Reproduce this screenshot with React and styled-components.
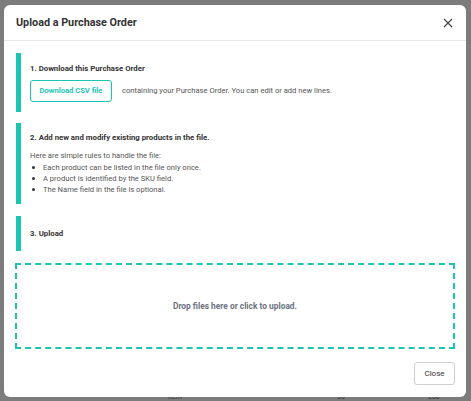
import React from 'react';
import styled, { createGlobalStyle } from 'styled-components';

const teal = '#1cc5b3';

const GlobalStyle = createGlobalStyle`
  html, body {
    margin: 0;
    padding: 0;
    background: #7c7c7c;
  }
  body {
    font-family: Roboto, "Noto Sans", sans-serif;
    color: #333;
  }
`;

const Backdrop = styled.div`
  width: 471px;
  height: 401px;
  box-sizing: border-box;
  padding: 5px 5px 4px 4px;
  background: #7c7c7c;
  position: relative;
  overflow: hidden;
`;

const BehindRow = styled.div`
  position: absolute;
  left: 0;
  right: 0;
  top: 393px;
  height: 8px;
  font-size: 7px;
  line-height: 8px;
  color: #3a3a3a;
`;

const BehindCell = styled.span`
  position: absolute;
  left: ${p => p.x}px;
`;

const Modal = styled.div`
  position: relative;
  width: 462px;
  height: 392px;
  background: #fff;
  border-radius: 6px;
  display: flex;
  flex-direction: column;
  box-sizing: border-box;
`;

const Header = styled.div`
  height: 36px;
  display: flex;
  align-items: center;
  justify-content: space-between;
  padding: 0 12px;
  border-bottom: 1px solid #e8e8e8;
  box-sizing: border-box;
`;

const Title = styled.h1`
  margin: 0;
  font-size: 10.8px;
  font-weight: 700;
  color: #333;
`;

const CloseIcon = styled.button`
  border: none;
  background: none;
  padding: 0;
  width: 12px;
  height: 12px;
  display: flex;
  align-items: center;
  justify-content: center;
  cursor: pointer;
  color: #444;
`;

const Body = styled.div`
  flex: 1;
  display: flex;
  flex-direction: column;
  padding: 12px 11px 0 12px;
  gap: 11px;
`;

const Step = styled.section`
  border-left: 5px solid ${teal};
  padding-left: 9px;
  height: ${p => p.h}px;
  margin-top: ${p => p.offset || 0}px;
  box-sizing: border-box;
  display: flex;
  flex-direction: column;
  justify-content: center;
`;

const StepTitle = styled.div`
  font-size: 7.8px;
  font-weight: 700;
  color: #333;
`;

const Row = styled.div`
  display: flex;
  align-items: center;
  gap: 10px;
  margin-top: 7px;
`;

const CsvButton = styled.button`
  flex: none;
  margin: 0;
  height: 22px;
  width: 82px;
  border: 1px solid ${teal};
  border-radius: 3px;
  background: #fff;
  color: ${teal};
  font-family: inherit;
  font-size: 7.6px;
  font-weight: 700;
  padding: 0;
`;

const Text = styled.div`
  font-size: 7.6px;
  color: #555;
`;

const Intro = styled(Text)`
  margin-top: 9px;
`;

const Rules = styled.ul`
  margin: 2px 0 0;
  padding: 0;
  list-style: none;
`;

const Rule = styled.li`
  font-size: 7.6px;
  color: #555;
  line-height: 11px;
  display: flex;
  align-items: center;
  &::before {
    content: '';
    width: 3px;
    height: 3px;
    border-radius: 50%;
    background: #333;
    margin: 0 8px 0 2px;
  }
`;

const DropZone = styled.div`
  height: 86px;
  margin: 1px 0 0 -1px;
  border: 2px dashed ${teal};
  box-sizing: border-box;
  display: flex;
  align-items: center;
  justify-content: center;
  font-size: 8.4px;
  font-weight: 700;
  color: #6d7280;
`;

const Footer = styled.div`
  display: flex;
  justify-content: flex-end;
  padding: 13px 11px 12px 0;
`;

const CloseButton = styled.button`
  margin: 0;
  width: 41px;
  height: 23px;
  border: 1px solid #cfcfcf;
  border-radius: 3px;
  background: #fff;
  font-family: inherit;
  font-size: 8px;
  color: #333;
  padding: 0;
`;

const App = () => {
  return (
    <>
      <GlobalStyle />
      <Backdrop>
        <BehindRow>
          <BehindCell x={168}>item</BehindCell>
          <BehindCell x={337}>30</BehindCell>
          <BehindCell x={428}>200</BehindCell>
        </BehindRow>
        <Modal>
          <Header>
            <Title>Upload a Purchase Order</Title>
            <CloseIcon aria-label="Close">
              <svg width="10" height="10" viewBox="0 0 10 10">
                <path d="M1 1 L9 9 M9 1 L1 9" stroke="#444" strokeWidth="1.2" />
              </svg>
            </CloseIcon>
          </Header>
          <Body>
            <Step h={59}>
              <StepTitle>1. Download this Purchase Order</StepTitle>
              <Row>
                <CsvButton>Download CSV file</CsvButton>
                <Text>containing your Purchase Order. You can edit or add new lines.</Text>
              </Row>
            </Step>
            <Step h={81}>
              <StepTitle>2. Add new and modify existing products in the file.</StepTitle>
              <Intro>Here are simple rules to handle the file:</Intro>
              <Rules>
                <Rule>Each product can be listed in the file only once.</Rule>
                <Rule>A product is identified by the SKU field.</Rule>
                <Rule>The Name field in the file is optional.</Rule>
              </Rules>
            </Step>
            <Step h={35} offset={1}>
              <StepTitle>3. Upload</StepTitle>
            </Step>
            <DropZone>Drop files here or click to upload.</DropZone>
          </Body>
          <Footer>
            <CloseButton>Close</CloseButton>
          </Footer>
        </Modal>
      </Backdrop>
    </>
  );
};

export default App;
